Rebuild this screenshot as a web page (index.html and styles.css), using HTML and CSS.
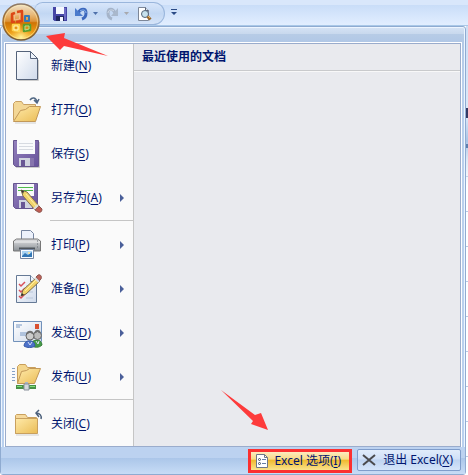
FILE: index.html
```html
<!DOCTYPE html>
<html lang="zh-CN">
<head>
  <meta charset="UTF-8" />
  <meta name="viewport" content="width=device-width, initial-scale=1.0" />
  <title>Excel</title>
  <link rel="stylesheet" href="styles.css">
</head>
<body>

  <header class="titlebar">
    <div class="quick-access">
      <button class="qa-btn" aria-label="保存">
        <svg width="14" height="14" viewBox="0 0 14 14">
          <path d="M0 0h14v14H1.500L0 12.500z" fill="#4545a5"/>
          <path d="M3 0h8v7H3z" fill="#f5f8ff"/>
          <path d="M11 1h2v12h-2z" fill="#6d6bc5"/>
          <path d="M3 9h8v5H3z" fill="#20275f"/>
          <path d="M7 10h3v4H7z" fill="#f4f6ff"/>
        </svg>
      </button>
      <button class="qa-btn" aria-label="撤消">
        <svg width="14" height="14" viewBox="0 0 14 14">
          <path d="M3 6C6 1 11 1 11 6c0 3-1 5-4 6" fill="none" stroke="#3c68bd" stroke-width="3"/>
          <path d="M0 1v8h8z" fill="#4b7bcc"/>
          <path d="M5 4c3-2 6-1 6 2" fill="none" stroke="#8db5ed"/>
        </svg>
      </button>
      <button class="qa-arrow" aria-label="撤消列表"><svg width="5" height="3" viewBox="0 0 5 3"><path d="M0 0h5L2.500 3z" fill="#4e70aa"/></svg></button>
      <button class="qa-btn" aria-label="恢复">
        <svg width="14" height="14" viewBox="0 0 14 14">
          <path d="M9 6C7 1 2 1 2 6c0 3 1 5 4 6" fill="none" stroke="#a5b4c9" stroke-width="3"/>
          <path d="M12 1v8H5z" fill="#a9b8cc"/>
          <path d="M8 4C6 2 2 3 2 6" fill="none" stroke="#ced9e7"/>
        </svg>
      </button>
      <button class="qa-arrow" aria-label="恢复列表"><svg width="5" height="3" viewBox="0 0 5 3"><path d="M0 0h5L2.500 3z" fill="#a8a9ad"/></svg></button>
      <button class="qa-btn" aria-label="打印预览">
        <svg width="15" height="14" viewBox="0 0 15 14">
          <path d="M1.500.5h7l3 3v10h-10z" fill="#fff" stroke="#7d8798"/>
          <path d="M8.500.5v3h3" fill="#dce5f2" stroke="#566177"/>
          <circle cx="8" cy="7" r="3.500" fill="#c7e2ed" stroke="#536578"/>
          <path d="M10.500 9.500l3 3" stroke="#9a682c" stroke-width="3"/>
          <path d="M11 9l2 2" stroke="#e7b35d"/>
        </svg>
      </button>
    </div>
    <button class="qa-more" aria-label="自定义快速访问工具栏">
      <svg width="6" height="6" viewBox="0 0 6 6"><path d="M0 0h6v1H0zM0 3h6L3 6z" fill="#2b4b86"/></svg>
    </button>
    <button class="office-button" aria-label="Office 按钮">
      <svg width="38" height="38" viewBox="0 0 38 38">
        <defs>
          <linearGradient id="rim" x2="0" y2="1"><stop stop-color="#8e7a65"/><stop offset=".5" stop-color="#a06c2c"/><stop offset="1" stop-color="#765b37"/></linearGradient>
          <linearGradient id="orb" x2="0" y2="1"><stop stop-color="#efe3cd"/><stop offset=".3" stop-color="#e8b877"/><stop offset=".48" stop-color="#dc9338"/><stop offset=".52" stop-color="#cf7405"/><stop offset=".8" stop-color="#ee9d15"/><stop offset="1" stop-color="#ffe26e"/></linearGradient>
          <radialGradient id="shine" cx=".5" cy=".95" r=".4"><stop stop-color="#fff49a"/><stop offset="1" stop-color="#f0a51b" stop-opacity="0"/></radialGradient>
        </defs>
        <circle cx="19" cy="19" r="18" fill="url(#orb)" stroke="url(#rim)" stroke-width="1.500"/>
        <circle cx="19" cy="19" r="17" fill="url(#shine)"/>
        <circle cx="19" cy="19" r="16.500" fill="none" stroke="#fff0ad" stroke-opacity=".5"/>
        <g fill="none" stroke-linejoin="round">
          <path d="M13 10l-3 1v8h3M15 9l5-1v10l-6 1" stroke="#dd4716" stroke-width="2.500"/>
          <path d="M12.500 12l5-1v5l-5 1z" stroke="#f8b88a" stroke-width="1"/>
          <path d="M23 13h4v5h-4z" stroke="#3579b6" stroke-width="2"/>
          <path d="M11 22h6v6l-6-1z" stroke="#ffd34d" stroke-width="2.500"/>
          <path d="M12 23h4v4h-4z" stroke="#fff3b5" stroke-width="1"/>
          <path d="M22 22h6v5l-6 1z" stroke="#5c9e2c" stroke-width="2.500"/>
          <path d="M23 23h4v3l-4 1z" stroke="#c5de86" stroke-width="1"/>
        </g>
      </svg>
    </button>
  </header>

  <div class="workspace">
    <main class="office-menu">
      <div class="menu-body">
        <nav class="commands">
          <ul>
            <li><button class="command">
              <svg class="icon" viewBox="0 0 32 32">
                <defs><linearGradient id="page" x2="1" y2="1"><stop stop-color="#fff"/><stop offset="1" stop-color="#cfdaeb"/></linearGradient></defs>
                <path d="M5.500 1.500h14l7 7v21h-21z" fill="url(#page)" stroke="#55637a"/>
                <path d="M19.500 1.500v7h7z" fill="#edf3fb" stroke="#55637a"/>
                <path d="M27.500 10v20.500H7" fill="none" stroke="#ccc"/>
              </svg>
              <span>新建(<u>N</u>)</span></button></li>
            <li><button class="command">
              <svg class="icon" viewBox="0 0 32 32">
                <defs><linearGradient id="folder" x2="1" y2="1"><stop stop-color="#ffeaaa"/><stop offset="1" stop-color="#eabc55"/></linearGradient></defs>
                <path d="M2.500 26.500v-17l2-2h6l2 3h12v5" fill="#f3d796" stroke="#c8a063"/>
                <path d="M2.500 27.500l7-11 5-1 4-3h11l-5 15z" fill="url(#folder)" stroke="#c29858"/>
                <path d="M19 6c2-3 6-3 7 2M23 6l3 3 2-4" fill="none" stroke="#506783" stroke-width="1.500"/>
                <path d="M4 29h21" stroke="#d0d0cf"/>
              </svg>
              <span>打开(<u>O</u>)</span></button></li>
            <li><button class="command">
              <svg class="icon" viewBox="0 0 32 32">
                <defs><linearGradient id="disk" x2="1" y2="1"><stop stop-color="#9481bd"/><stop offset="1" stop-color="#65519a"/></linearGradient></defs>
                <path d="M2.500 2.500h25v26h-23l-2-2z" fill="url(#disk)" stroke="#66558f"/>
                <path d="M6 2h18v14H6z" fill="#f9fafc"/>
                <path d="M8 5.500h14M8 8.500h14M8 11.500h14" stroke="#d6dae1"/>
                <path d="M8 20h15v8H8z" fill="#d1d4df"/><path d="M10 22h4v6h-4z" fill="#695794"/>
                <path d="M19 20h4v8h-4z" fill="#8674ad"/><path d="M28.500 4v25.500H5" fill="none" stroke="#ccc"/>
              </svg>
              <span>保存(<u>S</u>)</span></button></li>
            <li><button class="command">
              <svg class="icon" viewBox="0 0 32 32">
                <path d="M2.500 1.500h24v25h-22l-2-2z" fill="url(#disk)" stroke="#66558f"/>
                <path d="M6 2h17v12H6z" fill="#f9fafc"/>
                <path d="M7 5.500h15M7 8.500h15" stroke="#4fba4c"/>
                <path d="M8 18h13v8H8z" fill="#d1d4df"/><path d="M10 20h4v6h-4z" fill="#695794"/>
                <path d="M10 8l6 2 12 14-4 4-12-14z" fill="#f2d56c" stroke="#85704f"/>
                <path d="M10 8l3 1-1 3z" fill="#343434"/><path d="M15 12l11 13" stroke="#fff1a5"/>
                <path d="M24 28l4-4 3 3c0 3-2 4-4 3z" fill="#c15c51" stroke="#8c5751"/>
                <path d="M23 27l4-4" stroke="#ddd" stroke-width="2"/>
              </svg>
              <span>另存为(<u>A</u>)</span><svg class="more" viewBox="0 0 4 8"><path d="M0 0v8l4-4z"/></svg></button></li>
            <li class="group"><button class="command">
              <svg class="icon" viewBox="0 0 32 32">
                <defs><linearGradient id="printer" x2="0" y2="1"><stop stop-color="#e0e1e3"/><stop offset=".5" stop-color="#b5b8bc"/><stop offset="1" stop-color="#8c9197"/></linearGradient></defs>
                <path d="M10.500 12V1.500h9l3 3V12" fill="#edf2fc" stroke="#7685a0"/>
                <path d="M2.500 12l3-2h21l3 2v10h-27z" fill="url(#printer)" stroke="#777"/>
                <path d="M3 13h26" stroke="#f1f1f1"/><path d="M8 19.500h16" stroke="#4f555c" stroke-width="2"/>
                <path d="M26 12h1M26 15h1M26 18h1" stroke="#626970"/>
                <path d="M9.500 20.500h13v9h-13z" fill="#f7fbff" stroke="#7585a0"/>
                <path d="M11 22h10v6H11z" fill="#a8d2f1"/><path d="M11 27l3-3 3 2 4-3v5H11z" fill="#3377b5"/>
                <circle cx="18" cy="24" r="1" fill="#ffe99c"/>
              </svg>
              <span>打印(<u>P</u>)</span><svg class="more" viewBox="0 0 4 8"><path d="M0 0v8l4-4z"/></svg></button></li>
            <li><button class="command">
              <svg class="icon" viewBox="0 0 32 32">
                <path d="M5.500 2.500h14l6 6v21h-20z" fill="url(#page)" stroke="#657995"/>
                <path d="M19.500 2.500v6h6" fill="#eef4fc" stroke="#657995"/>
                <path d="M8 11l2 2 4-4M8 17l2 2 4-4M8 23l2 2 4-4" fill="none" stroke="#d84f58" stroke-width="1.500"/>
                <path d="M15 13h7M15 19h7M15 25h7" stroke="#b8c5d9"/>
                <path d="M10 23l2-6L26 4l3 4-14 13z" fill="#f4d46a" stroke="#7d6c48"/>
                <path d="M14 18L26 6" stroke="#fff0a4"/>
                <path d="M10 23l1-3 2 2z" fill="#2c2c2c"/>
                <path d="M25 4l2-2c3-1 4 2 3 4l-2 2z" fill="#bd6259" stroke="#8c5751"/>
                <path d="M24 5l4 4" stroke="#d9dce0" stroke-width="2"/>
              </svg>
              <span>准备(<u>E</u>)</span><svg class="more" viewBox="0 0 4 8"><path d="M0 0v8l4-4z"/></svg></button></li>
            <li><button class="command">
              <svg class="icon" viewBox="0 0 32 32">
                <path d="M2.500 4.500h28v20h-28z" fill="url(#page)" stroke="#7191ba"/>
                <path d="M5 8h6M5 10h4M9 16h8M9 18h6" stroke="#7998c4"/>
                <path d="M24 7h4v5h-4z" fill="#d95031"/>
                <path d="M20 28c0-6 11-7 11 0-3 3-8 3-11 0z" fill="#459b48" stroke="#397e3a"/>
                <path d="M13 29c0-7 11-7 11 0-3 2-8 2-11 0z" fill="#4c71c9" stroke="#385ba8"/>
                <circle cx="26.500" cy="18.500" r="4" fill="#bbb" stroke="#666"/>
                <circle cx="19" cy="19" r="4" fill="#ccc" stroke="#666"/>
                <path d="M16 17c1-3 5-3 6 0M24 16c1-3 4-3 5 0" fill="none" stroke="#707070" stroke-width="2"/>
                <path d="M17 25l2 3 2-3M25 24l2 3 1-3" fill="none" stroke="#d9e2f5"/>
              </svg>
              <span>发送(<u>D</u>)</span><svg class="more" viewBox="0 0 4 8"><path d="M0 0v8l4-4z"/></svg></button></li>
            <li><button class="command">
              <svg class="icon" viewBox="0 0 32 32">
                <path d="M1 7.500h3M1 10.500h3M1 13.500h3M1 16.500h3M1 19.500h3" stroke="#87a1c6"/>
                <path d="M6.500 22.500V5.500l2-2h6l2 3h8v3" fill="#f4d68d" stroke="#c99e5a"/>
                <path d="M6.500 22.500l4-12 5-1 3-2h11l-6 15z" fill="url(#folder)" stroke="#c29858"/>
                <path d="M14 21h3v4h-3z" fill="#aab5c5"/><path d="M5 26h20" stroke="#498f48" stroke-width="4"/>
                <path d="M6 25.500h5M19 25.500h5" stroke="#7fdf78"/>
                <path d="M13 23h5v6h-5z" fill="#d4d9dd" stroke="#879099"/>
              </svg>
              <span>发布(<u>U</u>)</span><svg class="more" viewBox="0 0 4 8"><path d="M0 0v8l4-4z"/></svg></button></li>
            <li class="group"><button class="command">
              <svg class="icon" viewBox="0 0 32 32">
                <path d="M4.500 25.500v-18l1-1h9l2 3h9v16z" fill="#f6d99c" stroke="#c9a05e"/>
                <path d="M4.500 10.500h22v15h-22z" fill="url(#folder)" stroke="#c9a05e"/>
                <path d="M30 11c1-3-1-6-5-6M28 2l-3 3 3 4" fill="none" stroke="#4c607b" stroke-width="1.500"/>
                <path d="M5 27h23" stroke="#d0d0cf"/>
              </svg>
              <span>关闭(<u>C</u>)</span></button></li>
          </ul>
        </nav>
        <section class="recent">
          <h2>最近使用的文档</h2>
          <svg class="pointer pointer-top" viewBox="0 0 62 24"><path d="M0 3l19-3-1 5 44 18-44-10-4 4z"/></svg>
          <svg class="pointer pointer-bottom" viewBox="0 0 48 40"><path d="M0 0l34 25 6-2 7 17-17-6 2-3z"/></svg>
        </section>
      </div>
      <footer class="menu-footer">
        <button class="foot-btn options">
          <svg width="12" height="14" viewBox="0 0 12 14">
            <path d="M.5.5h8l3 3v10H.5z" fill="#fff" stroke="#6e7787"/><path d="M8.500.5v3h3" fill="none" stroke="#6e7787"/>
            <path d="M6 5.500h4M6 9.500h4" stroke="#677fa5"/>
            <circle cx="3.500" cy="5.500" r="1" fill="none" stroke="#424c5f"/><circle cx="3.500" cy="9.500" r="1" fill="none" stroke="#424c5f"/>
          </svg>
          <span>Excel 选项(<u>I</u>)</span>
        </button>
        <button class="foot-btn exit">
          <svg width="14" height="12" viewBox="0 0 14 12"><path d="M1 1l12 10M13 1L1 11" stroke="#4a4a4d" stroke-width="2"/></svg>
          <span>退出 Excel(<u>X</u>)</span>
        </button>
      </footer>
    </main>
    <div class="sheet-edge"></div>
  </div>
  <div class="sheet-row"><span></span><span>采购</span><span>1000.11</span><span></span><span></span></div>

</body>
</html>
```

FILE: styles.css
```css
* {
  box-sizing: border-box;
}

body {
  margin: 0;
  min-height: 100vh;
  display: flex;
  flex-direction: column;
  overflow: hidden;
  background-color: #fff;
  color: #00156e;
  font-family: "Noto Sans", "Noto Sans CJK SC", sans-serif;
  font-size: 12px;
  line-height: 16px;
}

button {
  margin: 0;
  padding: 0;
  border: none;
  background: none;
  color: inherit;
  font: inherit;
}

svg {
  display: block;
  flex: none;
}

u {
  text-underline-offset: 2px;
}

.titlebar {
  position: relative;
  height: 26px;
  padding-left: 34px;
  display: flex;
  align-items: flex-start;
  background: linear-gradient(#d9e7fb 0, #d9e7fb 5px, #c9ddf8 5px, #e2eeff 25px, #a9c8e8 25px);
}

.quick-access {
  height: 23px;
  margin-top: 2px;
  padding: 0 12px 0 18px;
  display: flex;
  align-items: center;
  border: 1px solid #9ab6dc;
  border-left-color: #b5cae6;
  border-radius: 9px 12px 12px 0;
  background: linear-gradient(#d8e6fa, #c2d7f3 50%, #d5e4f8);
}

.qa-btn {
  margin-right: 4px;
}

.qa-btn:last-child {
  margin-right: 0;
}

.qa-btn:first-child,
.qa-arrow {
  margin-right: 8px;
}

.qa-more {
  margin: 9px 0 0 6px;
}

.office-button {
  position: absolute;
  left: 2px;
  top: 3px;
  z-index: 2;
  border-radius: 50%;
}

.workspace {
  flex: 1;
  display: flex;
}

.office-menu {
  flex: 1;
  display: flex;
  flex-direction: column;
  padding: 16px 4px 0;
  border: 1px solid #8fabd1;
  border-radius: 3px;
  background: linear-gradient(#d5e3f5 0, #c8d8ed 7px, #b7cce6 7px, #b1c8e6 15px, #b9cfec 60px, #b9d0ee);
  box-shadow: inset 0 0 0 1px #edf5ff;
}

.menu-body {
  flex: 1;
  display: flex;
  border: 1px solid #9aaccc;
  outline: 1px solid #fff;
}

.commands {
  width: 128px;
  border-right: 1px solid #c5c5c5;
  background-color: #fafafa;
}

.commands ul {
  margin: 0;
  padding: 0;
  list-style: none;
}

.command {
  width: 100%;
  height: 44px;
  padding: 0 9px 0 5px;
  display: flex;
  align-items: center;
  text-align: left;
}

.icon {
  width: 32px;
  height: 32px;
  margin-right: 8px;
}

.group::before {
  content: "";
  display: block;
  height: 2px;
  margin-left: 44px;
  border-top: 1px solid #c5c5c5;
}

.more {
  width: 4px;
  height: 8px;
  margin-left: auto;
  fill: #4a5f99;
}

.recent {
  position: relative;
  flex: 1;
  background-color: #e9eaee;
}

.recent h2 {
  margin: 0;
  padding: 5px 8px;
  border-bottom: 1px solid #c9cacc;
  box-shadow: 0 1px #f8f8f8;
  font-size: 12px;
  line-height: 16px;
}

.pointer {
  position: absolute;
  fill: #fd3b3b;
}

.pointer-top {
  left: -88px;
  top: -11px;
  width: 62px;
  height: 24px;
}

.pointer-bottom {
  left: 87px;
  bottom: 16px;
  width: 48px;
  height: 40px;
}

.menu-footer {
  margin: 0 -4px;
  padding: 2px 4px 1px;
  display: flex;
  justify-content: flex-end;
  gap: 5px;
  background: linear-gradient(#bcd2f0 0, #bcd2f0 11px, #abc6e9 11px, #c7dcf6);
}

.foot-btn {
  height: 24px;
  display: flex;
  align-items: center;
  white-space: nowrap;
}

.options {
  padding: 0 8px 0 5px;
  gap: 6px;
  border: 3px solid #fb3030;
  background: linear-gradient(#fcebc0, #f8db86 40%, #f0b92d 45%, #fbe38c);
}

.exit {
  height: 22px;
  padding: 0 7px 0 4px;
  gap: 7px;
  border: 1px solid #7f9dcb;
  border-radius: 2px;
  background: linear-gradient(#e1ecfb, #d0e0f7 45%, #bfd4f1 50%, #d5e5fa);
}

.sheet-edge {
  width: 2px;
  background:
    linear-gradient(#343a63, #343a63) 0 82px / 2px 10px no-repeat,
    linear-gradient(#5d7fae, #5d7fae) 0 118px / 2px 4px no-repeat,
    linear-gradient(#ccdef5 0, #dce9f8 90px, #a9c4e6 115px, #dfe9f5 134px, transparent 160px),
    repeating-linear-gradient(#fff 0 10px, #b9cbe4 10px 11px, #fff 11px 35px);
}

.sheet-row {
  height: 2px;
  display: grid;
  grid-template-columns: 43px 104px 138px 104px 1fr;
  overflow: hidden;
  color: #000;
  font-size: 16px;
  line-height: 12px;
  text-align: center;
}

.sheet-row span {
  height: 3px;
  border-right: 1px solid #d0d7e5;
}

.sheet-row span:first-child {
  background-color: #e4ecf7;
  border-right-color: #9eb6ce;
}
```
